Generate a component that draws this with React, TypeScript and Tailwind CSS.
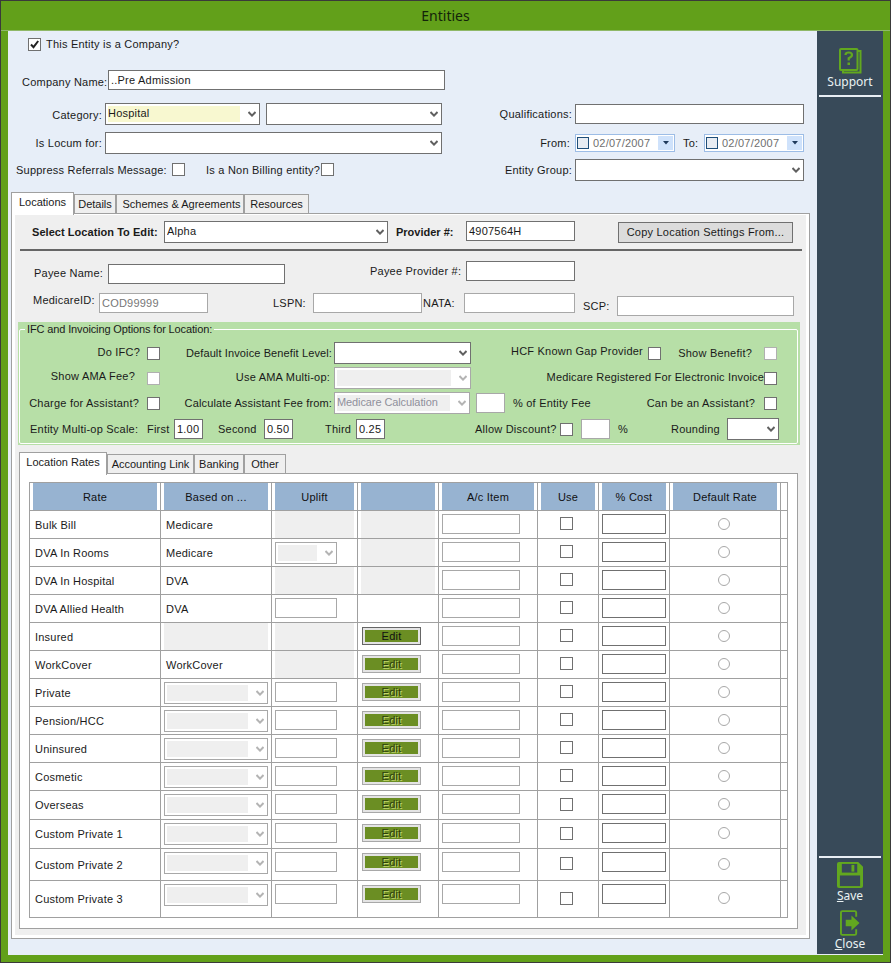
import { ReactNode } from "react";

const Chevron = ({ off }: { off?: boolean }) => (
  <svg width="8" height="6" viewBox="0 0 8 6" className="shrink-0 ml-[8px] mr-[3px]">
    <path d="M0.5 1 L4 4.6 L7.5 1" fill="none" stroke={off ? "#b4b4b4" : "#606060"} strokeWidth="2" />
  </svg>
);

type FieldProps = { className: string; off?: boolean; children?: ReactNode };

// plain text box, the size comes in through className
const Field = ({ className, off, children }: FieldProps) => (
  <div
    className={`shrink-0 flex items-center border bg-white pl-[2px] whitespace-nowrap ${
      off ? "border-[#a8a8a8] text-[#777]" : "border-[#707070]"
    } ${className}`}
  >
    {children}
  </div>
);

type SelectProps = { className: string; off?: boolean; yellow?: boolean; text?: string };

const Select = ({ className, off, yellow, text }: SelectProps) => (
  <div
    className={`shrink-0 flex items-center border bg-white ${off ? "border-[#a8a8a8]" : "border-[#707070]"} ${className}`}
  >
    <div
      className={`flex-1 h-[16px] ml-[2px] leading-[14px] whitespace-nowrap overflow-hidden ${
        off ? "bg-[#efefef] text-[#8f8f9c] tracking-[-0.1px]" : yellow ? "bg-[#f8f8d0]" : ""
      }`}
    >
      {text}
    </div>
    <Chevron off={off} />
  </div>
);

const Check = ({ off, checked, className = "" }: { off?: boolean; checked?: boolean; className?: string }) => (
  <div
    className={`shrink-0 flex items-center justify-center w-[13px] h-[13px] border bg-white ${
      off ? "border-[#b0b0b0]" : "border-[#707070]"
    } ${className}`}
  >
    {checked && (
      <svg width="11" height="11" viewBox="0 0 11 11">
        <path d="M2 5.5 L4.5 8.2 L9.2 2" fill="none" stroke="#222" strokeWidth="2" />
      </svg>
    )}
  </div>
);

const Radio = () => <div className="w-[12px] h-[12px] rounded-full border border-[#a8a8a8] bg-white" />;

const DatePick = () => (
  <div className="shrink-0 flex items-center w-[100px] h-[18px] border border-[#9dbde6] bg-white pl-[1px] pr-[1px]">
    <div className="w-[12px] h-[12px] border border-[#1f4e79] bg-[#e8ecf2]" />
    <span className="ml-[4px] text-[#6f6f6f]">02/07/2007</span>
    <div className="ml-auto flex items-center justify-center w-[15px] h-[14px] bg-[#cfe2fb]">
      <svg width="6" height="4" viewBox="0 0 6 4">
        <path d="M0 0 H6 L3 3.5 Z" fill="#1f3a5c" />
      </svg>
    </div>
  </div>
);

const Tab = ({ label, className, active }: { label: string; className: string; active?: boolean }) => (
  <div
    className={`shrink-0 flex items-center justify-center border border-[#a0a0a0] border-b-0 whitespace-nowrap tracking-normal ${
      active ? "h-[23px] -mb-[2px] bg-white pb-[3px] relative z-10" : "h-[19px] bg-[#efefef]"
    } ${className}`}
  >
    {label}
  </div>
);

const Label = ({ className, children }: { className: string; children: ReactNode }) => (
  <span className={`shrink-0 whitespace-nowrap ${className}`}>{children}</span>
);

const COLS = "grid grid-cols-[131px_111px_86px_81px_99px_61px_71px_111px_7px]";
const CELL = "border-r border-b border-[#a0a0a0]";

type Rate = {
  name: string;
  based: string | null;
  uplift: "grey" | "select" | "input";
  edit: "grey" | "none" | "on" | "off";
  height?: string;
};

const privateRate = (name: string, height = "h-[28px]"): Rate => ({
  name,
  based: null,
  uplift: "input",
  edit: "off",
  height,
});

const rates: Rate[] = [
  { name: "Bulk Bill", based: "Medicare", uplift: "grey", edit: "grey" },
  { name: "DVA In Rooms", based: "Medicare", uplift: "select", edit: "grey" },
  { name: "DVA In Hospital", based: "DVA", uplift: "grey", edit: "grey" },
  { name: "DVA Allied Health", based: "DVA", uplift: "input", edit: "none" },
  { name: "Insured", based: "", uplift: "grey", edit: "on" },
  { name: "WorkCover", based: "WorkCover", uplift: "grey", edit: "off" },
  privateRate("Private"),
  privateRate("Pension/HCC"),
  privateRate("Uninsured"),
  privateRate("Cosmetic"),
  privateRate("Overseas", "h-[29px]"),
  privateRate("Custom Private 1", "h-[29px]"),
  privateRate("Custom Private 2", "h-[32px]"),
  privateRate("Custom Private 3", "h-[37px]"),
];

const headers = ["Rate", "Based on ...", "Uplift", "", "A/c Item", "Use", "% Cost", "Default Rate"];

const EditButton = ({ on }: { on: boolean }) => (
  <div
    className={`w-[59px] h-[18px] border p-[2px] bg-[#e4e4e4] ${on ? "border-[#666]" : "border-[#a8a8a8]"}`}
  >
    <div
      className={`h-full flex items-center justify-center bg-[#6b8e23] ${
        on ? "text-[#111]" : "text-[#2e3f0c] [text-shadow:1px_1px_0_#c3d66e]"
      }`}
    >
      Edit
    </div>
  </div>
);

const RatesTable = () => (
  <div className="w-[759px] border-l border-t border-[#a0a0a0]">
    <div className={`${COLS} h-[28px]`}>
      {headers.map((h, i) => (
        <div key={i} className={CELL}>
          <div className="h-full mx-[3px] pt-[1px] flex items-center justify-center bg-[#97b3d1] text-[#111]">{h}</div>
        </div>
      ))}
      <div className={CELL} />
    </div>
    {rates.map((r) => (
      <div key={r.name} className={`${COLS} ${r.height ?? "h-[28px]"}`}>
        <div className={`${CELL} flex items-center pl-[5px] pt-[1px]`}>{r.name}</div>
        {r.based === null ? (
          <div className={`${CELL} pl-[3px] pt-[3px]`}>
            <Select off className="w-[104px] h-[22px]" />
          </div>
        ) : r.based === "" ? (
          <div className={CELL}>
            <div className="h-full mx-[3px] bg-[#efefef]" />
          </div>
        ) : (
          <div className={`${CELL} flex items-center pl-[5px] pt-[1px]`}>{r.based}</div>
        )}
        <div className={`${CELL} ${r.uplift === "grey" ? "" : "pl-[3px] pt-[3px]"}`}>
          {r.uplift === "grey" && <div className="h-full mx-[3px] bg-[#efefef]" />}
          {r.uplift === "select" && <Select off className="w-[62px] h-[22px]" />}
          {r.uplift === "input" && <Field off className="w-[62px] h-[20px]" />}
        </div>
        <div className={`${CELL} ${r.edit === "on" || r.edit === "off" ? "pl-[4px] pt-[4px]" : ""}`}>
          {r.edit === "grey" && <div className="h-full mx-[3px] bg-[#efefef]" />}
          {r.edit === "on" && <EditButton on />}
          {r.edit === "off" && <EditButton on={false} />}
        </div>
        <div className={`${CELL} pl-[3px] pt-[3px]`}>
          <Field off className="w-[78px] h-[20px]" />
        </div>
        <div className={`${CELL} flex items-center pl-[22px] pb-[2px]`}>
          <Check />
        </div>
        <div className={`${CELL} pl-[3px] pt-[3px]`}>
          <Field className="w-[64px] h-[20px]" />
        </div>
        <div className={`${CELL} flex items-center pl-[48px] pb-[2px]`}>
          <Radio />
        </div>
        <div className={CELL} />
      </div>
    ))}
  </div>
);

const InvoicingOptions = () => (
  <div className="relative ml-[3px] mt-[6px] w-[782px] h-[123px] bg-[#b7dfa7] pt-[20px]">
    <div className="absolute left-[1px] right-[2px] top-[7px] bottom-[1px] border border-white rounded-[2px]" />
    <span className="absolute left-[7px] top-[1px] px-[2px] h-[13px] bg-[#b7dfa7] whitespace-nowrap tracking-[-0.13px]">
      IFC and Invoicing Options for Location:
    </span>
    <div className="relative flex items-center h-[22px]">
      <Label className="w-[122px] text-right -mt-[2px]">Do IFC?</Label>
      <Check className="ml-[7px]" />
      <Label className="w-[172px] text-right tracking-[0.12px]">Default Invoice Benefit Level:</Label>
      <Select className="ml-[2px] w-[137px] h-[22px]" />
      <Label className="w-[172px] text-right -mt-[3px]">HCF Known Gap Provider</Label>
      <Check className="ml-[5px]" />
      <Label className="w-[91px] text-right">Show Benefit?</Label>
      <Check off className="ml-[12px]" />
    </div>
    <div className="relative flex items-center h-[22px] mt-[3px]">
      <Label className="w-[117px] text-right -mt-[3px]">Show AMA Fee?</Label>
      <Check off className="ml-[12px]" />
      <Label className="w-[170px] text-right -mt-[2px]">Use AMA Multi-op:</Label>
      <Select off className="ml-[4px] w-[137px] h-[22px]" />
      <Label className="w-[293px] text-right -mt-[2px] tracking-[0.17px]">Medicare Registered For Electronic Invoice</Label>
      <Check />
    </div>
    <div className="relative flex items-center h-[22px] mt-[3px]">
      <Label className="w-[121px] text-right">Charge for Assistant?</Label>
      <Check className="ml-[8px]" />
      <Label className="w-[172px] text-right tracking-[0.15px]">Calculate Assistant Fee from:</Label>
      <Select off text="Medicare Calculation" className="ml-[2px] w-[136px] h-[22px]" />
      <Field off className="ml-[6px] w-[29px] h-[20px]" />
      <Label className="ml-[8px] w-[77px]">% of Entity Fee</Label>
      <Label className="w-[165px] text-right">Can be an Assistant?</Label>
      <Check className="ml-[9px]" />
    </div>
    <div className="relative flex items-center h-[22px] mt-[4px]">
      <Label className="ml-[12px] w-[107px]">Entity Multi-op Scale:</Label>
      <Label className="ml-[10px] w-[23px]">First</Label>
      <Field className="ml-[4px] w-[29px] h-[20px]">1.00</Field>
      <Label className="ml-[15px] w-[40px]">Second</Label>
      <Field className="ml-[6px] w-[29px] h-[20px]">0.50</Field>
      <Label className="ml-[32px] w-[27px]">Third</Label>
      <Field className="ml-[4px] w-[29px] h-[20px]">0.25</Field>
      <Label className="ml-[90px] w-[83px]">Allow Discount?</Label>
      <Check className="ml-[2px]" />
      <Field off className="ml-[8px] w-[29px] h-[20px]" />
      <Label className="ml-[8px] w-[9px]">%</Label>
      <Label className="ml-[44px] w-[51px]">Rounding</Label>
      <Select className="ml-[5px] w-[52px] h-[22px]" />
    </div>
  </div>
);

const LocationsPanel = () => (
  <div className="bg-[#efefef] h-[720px] pt-[6px]">
    <div className="flex items-start h-[22px] pl-[17px]">
      <Label className="w-[132px] font-bold leading-[22px] tracking-[0.05px]">Select Location To Edit:</Label>
      <Select text="Alpha" className="w-[224px] h-[22px]" />
      <Label className="ml-[8px] w-[70px] font-bold leading-[22px] tracking-normal">Provider #:</Label>
      <Field className="w-[109px] h-[20px]">4907564H</Field>
      <div className="ml-[43px] mt-[1px] w-[175px] h-[21px] flex items-center justify-center border border-[#707070] bg-[#dcdcdc]">
        Copy Location Settings From...
      </div>
    </div>
    <div className="ml-[5px] mt-[6px] w-[782px] h-[2px] bg-[#666]" />
    <div className="flex items-start h-[32px] mt-[10px]">
      <Label className="ml-[19px] mt-[6px] w-[74px]">Payee Name:</Label>
      <Field className="mt-[3px] w-[177px] h-[20px]" />
      <Label className="ml-[85px] mt-[4px] w-[96px]">Payee Provider #:</Label>
      <Field className="w-[109px] h-[20px]" />
    </div>
    <div className="flex items-start h-[23px]">
      <Label className="ml-[18px] mt-[1px] w-[66px]">MedicareID:</Label>
      <Field off className="w-[109px] h-[20px]">
        COD99999
      </Field>
      <Label className="ml-[65px] mt-[4px] w-[40px]">LSPN:</Label>
      <Field off className="w-[109px] h-[20px]" />
      <Label className="ml-[1px] mt-[4px] w-[41px]">NATA:</Label>
      <Field off className="w-[111px] h-[20px]" />
      <Label className="ml-[8px] mt-[7px] w-[34px]">SCP:</Label>
      <Field off className="mt-[3px] w-[177px] h-[20px]" />
    </div>
    <InvoicingOptions />
    <div className="flex items-end h-[21px] mt-[7px] ml-[4px] relative">
      <Tab active label="Location Rates" className="w-[88px]" />
      <Tab label="Accounting Link" className="w-[87px]" />
      <Tab label="Banking" className="w-[50px]" />
      <Tab label="Other" className="w-[42px]" />
    </div>
    <div className="ml-[4px] w-[779px] h-[456px] border border-[#a0a0a0] bg-white pl-[9px] pt-[8px]">
      <RatesTable />
    </div>
  </div>
);

const SupportIcon = () => (
  <svg width="23" height="26" viewBox="0 0 23 26" fill="none" stroke="#62a81f" strokeWidth="2">
    <path d="M19 3 H21.5 V24.5 H4 V22" />
    <rect x="1" y="1" width="17.5" height="21" rx="1" />
    <path d="M6.5 7 Q6.5 4.5 9.7 4.5 Q13 4.5 13 7 Q13 8.8 9.7 10.2 V12.5" strokeWidth="2.2" />
    <rect x="8.5" y="14.5" width="2.5" height="2.5" fill="#62a81f" stroke="none" />
  </svg>
);

const SaveIcon = () => (
  <svg width="26" height="26" viewBox="0 0 27 27">
    <path d="M2 0 H22 L27 5 V25 Q27 27 25 27 H2 Q0 27 0 25 V2 Q0 0 2 0 Z" fill="#62a81f" />
    <rect x="5" y="2" width="16" height="9" fill="#384a59" />
    <rect x="15" y="3" width="3" height="7" fill="#62a81f" />
    <rect x="3" y="14" width="21" height="11" fill="#384a59" />
  </svg>
);

const CloseIcon = () => (
  <svg width="20" height="26" viewBox="0 0 21 27" fill="none">
    <path d="M17 7 V2.5 Q17 1 15.5 1 H2.5 Q1 1 1 2.5 V24.5 Q1 26 2.5 26 H15.5 Q17 26 17 24.5 V20" stroke="#62a81f" strokeWidth="2" />
    <path d="M6 10 H12 V5.5 L20.5 13.5 L12 21.5 V17 H6 Z" fill="#62a81f" />
  </svg>
);

const Sidebar = () => (
  <div className="w-[66px] shrink-0 flex flex-col justify-between bg-[#384a59] border-b border-[#e8eef4] [font-family:Noto_Sans,sans-serif] tracking-normal text-[12px] text-[#eaf2f2]">
    <div className="flex flex-col items-center pt-[17px]">
      <SupportIcon />
      <span className="leading-[16px]">Support</span>
      <div className="mt-[5px] w-[62px] h-[2px] bg-[#e8eef4]" />
    </div>
    <div className="flex flex-col items-center">
      <div className="w-[62px] h-[2px] bg-[#e8eef4]" />
      <div className="mt-[4px]">
        <SaveIcon />
      </div>
      <span className="leading-[16px]">
        <span className="underline">S</span>ave
      </span>
      <div className="mt-[6px]">
        <CloseIcon />
      </div>
      <span className="leading-[16px] mb-[2px]">
        <span className="underline">C</span>lose
      </span>
    </div>
  </div>
);

export default function App() {
  return (
    <div className="w-[891px] h-[963px] flex flex-col border border-[#3a3a3a] bg-[#62a01a] overflow-hidden [font-family:Liberation_Sans,Arial,sans-serif] text-[11px] leading-[13px] tracking-[0.22px] text-[#1a1a1a]">
      <div className="h-[30px] shrink-0 flex items-center justify-center border-b border-[#8fb868] [font-family:Noto_Sans,sans-serif] tracking-normal text-[14px] text-[#13240a]">
        Entities
      </div>
      <div className="flex-1 flex mx-[7px] mb-[7px] min-h-0">
        <div className="w-[809px] shrink-0 bg-[#e7eef8]">
          <div className="flex items-center h-[13px] mt-[7px] ml-[20px]">
            <Check checked />
            <Label className="ml-[5px]">This Entity is a Company?</Label>
          </div>
          <div className="flex items-center h-[20px] mt-[19px] ml-[14px]">
            <Label className="w-[86px] mt-[4px]">Company Name:</Label>
            <Field className="w-[337px] h-[20px]">..Pre Admission</Field>
          </div>
          <div className="flex h-[73px] mt-[13px]">
            <div className="w-[434px] shrink-0">
              <div className="flex items-center h-[22px]">
                <Label className="w-[94px] text-right mt-[2px]">Category:</Label>
                <Select yellow text="Hospital" className="ml-[3px] w-[155px] h-[22px]" />
                <Select className="ml-[6px] w-[176px] h-[22px]" />
              </div>
              <div className="flex items-center h-[22px] mt-[7px]">
                <Label className="w-[94px] text-right">Is Locum for:</Label>
                <Select className="ml-[3px] w-[337px] h-[22px]" />
              </div>
              <div className="flex items-center h-[13px] mt-[9px]">
                <Label className="ml-[8px] w-[150px] mt-[2px]">Suppress Referrals Message:</Label>
                <Check className="ml-[6px]" />
                <Label className="ml-[21px] w-[114px] mt-[2px]">Is a Non Billing entity?</Label>
                <Check className="ml-[1px]" />
              </div>
            </div>
            <div className="flex-1">
              <div className="flex items-center h-[20px] mt-[1px]">
                <Label className="w-[130px] text-right">Qualifications:</Label>
                <Field className="ml-[3px] w-[229px] h-[20px]" />
              </div>
              <div className="flex items-center h-[18px] mt-[10px]">
                <Label className="w-[128px] text-right">From:</Label>
                <div className="ml-[5px]">
                  <DatePick />
                </div>
                <Label className="ml-[8px] w-[21px]">To:</Label>
                <DatePick />
              </div>
              <div className="flex items-center h-[22px] mt-[7px]">
                <Label className="w-[130px] text-right">Entity Group:</Label>
                <Select className="ml-[3px] w-[229px] h-[22px]" />
              </div>
            </div>
          </div>
          <div className="flex items-end h-[21px] mt-[16px] ml-[3px] relative">
            <Tab active label="Locations" className="w-[63px]" />
            <Tab label="Details" className="w-[42px]" />
            <Tab label="Schemes & Agreements" className="w-[128px] pl-[3px]" />
            <Tab label="Resources" className="w-[65px]" />
          </div>
          <div className="ml-[3px] w-[799px] h-[726px] border border-[#a0a0a0] bg-white px-[3px] pt-[1px]">
            <LocationsPanel />
          </div>
        </div>
        <Sidebar />
      </div>
    </div>
  );
}
